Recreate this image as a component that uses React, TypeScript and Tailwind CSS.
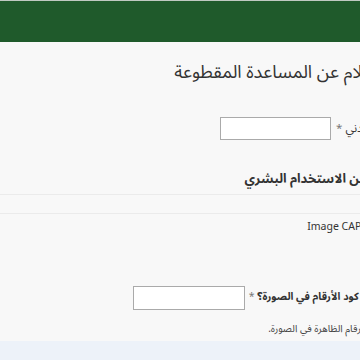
export default function App() {
  return (
    <div
      className="w-[360px] h-[360px] overflow-hidden bg-[#f8f8f8] flex flex-col"
      style={{ fontFamily: '"Noto Sans Arabic", "Noto Kufi Arabic", "DejaVu Sans", sans-serif' }}
    >
      <div className="h-[1px] bg-[#bfc9c1]" />
      <div className="h-[41px] bg-[#1f5a2b] shrink-0" />
      <div dir="rtl" className="flex-1 flex flex-col overflow-hidden">
        <div className="h-[60px] flex items-center mr-[-27px]">
          <h1 className="text-[18px] text-[#333] whitespace-nowrap">الإعلام عن المساعدة المقطوعة</h1>
        </div>
        <div className="flex items-center gap-[5px] mr-[-40px] mt-[15px] h-[23px]">
          <label className="text-[11.5px] text-[#333] whitespace-nowrap">الرقم المدني <span className="text-[#777]">*</span></label>
          <input className="w-[111px] h-[23px] bg-white border border-[#aaa]" />
        </div>
        <div className="mt-[31px] mr-[-50px] h-[18px] flex items-center">
          <h2 className="text-[13px] font-bold text-[#333] whitespace-nowrap">التحقق من الاستخدام البشري</h2>
        </div>
        <div className="mt-[5px] border-t border-b border-[#ebebeb] h-[20px]" />
        <div className="mt-[6px] mr-[-28px] h-[14px] flex items-center">
          <span dir="ltr" className="text-[10.5px] text-[#333] whitespace-nowrap" style={{ fontFamily: '"Noto Sans", sans-serif' }}>Image CAPTCHA</span>
        </div>
        <div className="flex items-center gap-[4px] mr-[-26px] mt-[52px] h-[24px]">
          <label className="text-[10.5px] font-bold text-[#333] whitespace-nowrap">ما هو كود الأرقام في الصورة؟ <span className="text-[#777] font-normal">*</span></label>
          <input className="w-[112px] h-[24px] bg-white border border-[#aaa]" />
        </div>
        <div className="mt-[11px] mr-[-32px] h-[14px] flex items-center">
          <span className="text-[10px] text-[#444] whitespace-nowrap">أدخل الأرقام الظاهرة في الصورة.</span>
        </div>
        <div className="mt-[6px] flex-1 bg-[#edf2f9]" />
      </div>
    </div>
  );
}
